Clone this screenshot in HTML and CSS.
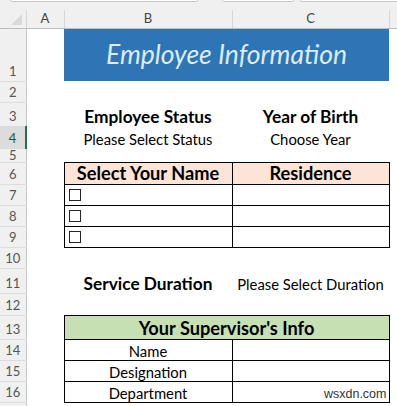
FILE: index.html
```html
<!DOCTYPE html>
<html lang="en">
<head>
  <meta charset="UTF-8" />
  <meta name="viewport" content="width=device-width, initial-scale=1.0" />
  <title>Employee Information</title>
  <link rel="stylesheet" href="styles.css">
</head>
<body>
  <div class="topbar">
    <span class="box box-name"></span>
    <span class="box box-mid"></span>
    <span class="box box-formula"></span>
  </div>
  <table class="sheet">
    <colgroup>
      <col class="col-rh">
      <col class="col-a">
      <col class="col-b">
      <col class="col-c">
      <col class="col-rest">
    </colgroup>
    <thead>
      <tr>
        <th class="corner"><span class="tri"></span></th>
        <th>A</th>
        <th>B</th>
        <th>C</th>
        <th class="last"></th>
      </tr>
    </thead>
    <tbody>
      <tr class="h53">
        <td class="rh">1</td><td></td>
        <td colspan="2" class="title">Employee Information</td><td></td>
      </tr>
      <tr class="h21"><td class="rh">2</td><td></td><td></td><td></td><td></td></tr>
      <tr class="h24">
        <td class="rh">3</td><td></td>
        <td class="label">Employee Status</td>
        <td class="label">Year of Birth</td><td></td>
      </tr>
      <tr class="h22">
        <td class="rh sel">4</td><td></td>
        <td class="text">Please Select Status</td>
        <td class="text">Choose Year</td><td></td>
      </tr>
      <tr class="h14"><td class="rh">5</td><td></td><td></td><td></td><td></td></tr>
      <tr class="h22">
        <td class="rh">6</td><td></td>
        <td class="box-cell head peach">Select Your Name</td>
        <td class="box-cell head peach">Residence</td><td></td>
      </tr>
      <tr class="h21">
        <td class="rh">7</td><td></td>
        <td class="box-cell check"><span class="cb"></span></td>
        <td class="box-cell"></td><td></td>
      </tr>
      <tr class="h21">
        <td class="rh">8</td><td></td>
        <td class="box-cell check"><span class="cb"></span></td>
        <td class="box-cell"></td><td></td>
      </tr>
      <tr class="h21">
        <td class="rh">9</td><td></td>
        <td class="box-cell check"><span class="cb"></span></td>
        <td class="box-cell"></td><td></td>
      </tr>
      <tr class="h21"><td class="rh">10</td><td></td><td></td><td></td><td></td></tr>
      <tr class="h25">
        <td class="rh">11</td><td></td>
        <td class="label">Service Duration</td>
        <td class="text">Please Select Duration</td><td></td>
      </tr>
      <tr class="h22"><td class="rh">12</td><td></td><td></td><td></td><td></td></tr>
      <tr class="h24">
        <td class="rh">13</td><td></td>
        <td colspan="2" class="box-cell head green">Your Supervisor's Info</td><td></td>
      </tr>
      <tr class="h21">
        <td class="rh">14</td><td></td>
        <td class="box-cell text">Name</td>
        <td class="box-cell"></td><td></td>
      </tr>
      <tr class="h21">
        <td class="rh">15</td><td></td>
        <td class="box-cell text">Designation</td>
        <td class="box-cell"></td><td></td>
      </tr>
      <tr class="h21">
        <td class="rh">16</td><td></td>
        <td class="box-cell text">Department</td>
        <td class="box-cell mark">wsxdn.com</td><td></td>
      </tr>
      <tr class="h21"><td class="rh"></td><td></td><td></td><td></td><td></td></tr>
    </tbody>
  </table>
</body>
</html>
```

FILE: styles.css
```css
body {
  margin: 0;
  overflow: hidden;
  background-color: #fff;
  font-family: Lato, "Open Sans", sans-serif;
  color: #000;
}
.topbar {
  height: 10px;
  background-color: #f0f0f0;
  position: relative;
}
.box {
  position: absolute;
  top: 0;
  height: 1px;
  background-color: #fff;
  border: 1px solid #c8c8c8;
  border-top: none;
  border-radius: 0 0 3px 3px;
}
.box-name { left: 10px; width: 186px; }
.box-mid { left: 222px; width: 70px; }
.box-formula { left: 300px; width: 100px; }

.sheet {
  border-collapse: collapse;
  table-layout: fixed;
  width: 397px;
}
.col-rh { width: 26px; }
.col-a { width: 38px; }
.col-b { width: 168px; }
.col-c { width: 157px; }
.col-rest { width: 8px; }

.sheet th,
.sheet td {
  box-sizing: border-box;
  padding: 0;
  line-height: 1;
}
.sheet th {
  height: 18px;
  background-color: #f0f0f0;
  border-right: 1px solid #d6d6d6;
  border-bottom: 1px solid #bdbdbd;
  font-weight: normal;
  font-size: 13px;
  color: #444;
}
.sheet th.last { border-right: none; }
.corner { position: relative; }
.tri {
  position: absolute;
  right: 4px;
  bottom: 3px;
  width: 0;
  height: 0;
  border-left: 11px solid transparent;
  border-bottom: 11px solid #dadada;
}
.sheet td {
  font-size: 14.8px;
  white-space: nowrap;
  overflow: hidden;
  vertical-align: bottom;
  padding-bottom: 1px;
}
.h53 td { height: 53px; }
.h25 td { height: 25px; }
.h24 td { height: 24px; }
.h22 td { height: 22px; }
.h21 td { height: 21px; }
.h14 td { height: 14px; }

.sheet td.rh {
  background-color: #f0f0f0;
  border-right: 1px solid #c8c8c8;
  border-bottom: 1px solid #dcdcdc;
  text-align: center;
  color: #555;
  font-size: 13px;
  padding-bottom: 3px;
}
.sheet .h14 td.rh { padding-bottom: 0; }
.sheet td.rh.sel {
  background-color: #dcdcdc;
  border-right: 2px solid #217346;
  color: #1e5b37;
}

.sheet td.title {
  background-color: #2e75b6;
  color: #ddebf7;
  font-style: italic;
  font-size: 26.5px;
  text-align: center;
  vertical-align: middle;
  padding-bottom: 2px;
}
.sheet td.label {
  font-weight: bold;
  font-size: 17.3px;
  text-align: center;
}
.text {
  text-align: center;
}
.box-cell {
  border: 1px solid #000;
}
.sheet td.head {
  font-weight: bold;
  font-size: 18.2px;
  text-align: center;
}
.peach { background-color: #fce4d6; }
.green { background-color: #c6e0b4; }
.sheet td.check {
  vertical-align: middle;
  padding-bottom: 0;
}
.cb {
  display: block;
  width: 12px;
  height: 12px;
  margin-left: 4px;
  border: 1px solid #262626;
  box-sizing: border-box;
}
.sheet td.mark {
  text-align: right;
  font-family: "Liberation Sans", Arial, sans-serif;
  font-size: 12.5px;
  color: #333;
  padding-right: 2px;
}
```
